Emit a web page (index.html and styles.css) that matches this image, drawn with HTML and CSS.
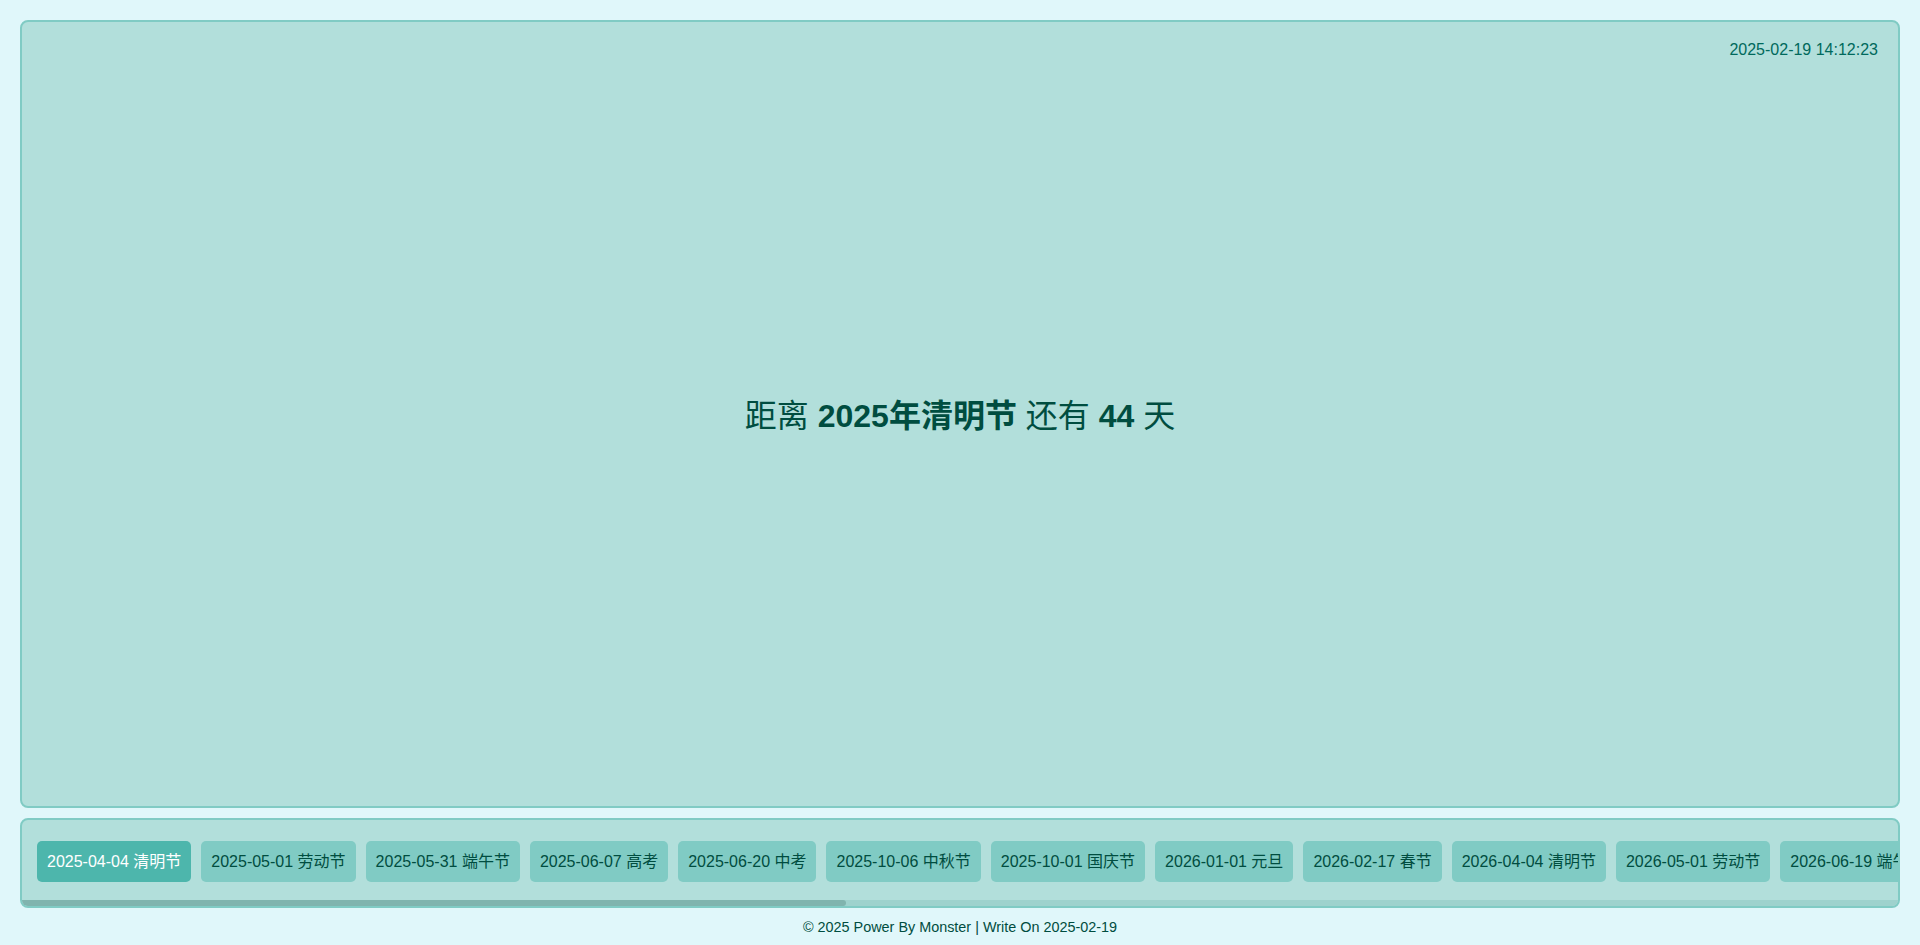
FILE: index.html
```html
<!DOCTYPE html>
<html lang="zh-CN">
<head>
<meta charset="utf-8">
<title>节日倒计时</title>
<link rel="stylesheet" href="styles.css">
</head>
<body>
<div class="page">
  <main class="stage">
    <div class="clock">2025-02-19 14:12:23</div>
    <div class="countdown">距离 <strong>2025年清明节</strong> 还有 <strong>44</strong> 天</div>
  </main>
  <nav class="dock">
    <div class="tabs">
      <span class="tab active">2025-04-04 清明节</span>
      <span class="tab">2025-05-01 劳动节</span>
      <span class="tab">2025-05-31 端午节</span>
      <span class="tab">2025-06-07 高考</span>
      <span class="tab">2025-06-20 中考</span>
      <span class="tab">2025-10-06 中秋节</span>
      <span class="tab">2025-10-01 国庆节</span>
      <span class="tab">2026-01-01 元旦</span>
      <span class="tab">2026-02-17 春节</span>
      <span class="tab">2026-04-04 清明节</span>
      <span class="tab">2026-05-01 劳动节</span>
      <span class="tab">2026-06-19 端午节</span>
      <span class="tab">2026-06-07 高考</span>
      <span class="tab">2026-06-20 中考</span>
      <span class="tab">2026-09-25 中秋节</span>
      <span class="tab">2026-10-01 国庆节</span>
      <span class="tab">2027-01-01 元旦</span>
      <span class="tab">2027-02-06 春节</span>
      <span class="tab">2027-04-05 清明节</span>
      <span class="tab">2027-05-01 劳动节</span>
      <span class="tab">2027-06-09 端午节</span>
      <span class="tab">2027-06-07 高考</span>
      <span class="tab">2027-06-20 中考</span>
      <span class="tab">2027-09-15 中秋节</span>
      <span class="tab">2027-10-01 国庆节</span>
      <span class="tab">2028-01-01 元旦</span>
      <span class="tab">2028-01-26 春节</span>
    </div>
    <div class="scroll-track"><div class="scroll-thumb" style="width: 824px"></div></div>
  </nav>
  <footer class="footer">© 2025 Power By Monster | Write On 2025-02-19</footer>
</div>
</body>
</html>
```

FILE: styles.css
```css
* { box-sizing: border-box; }

html, body {
  margin: 0;
  padding: 0;
  height: 100%;
}

body {
  background: #e0f7fa;
  font-family: "Liberation Sans", Arial, "Noto Sans CJK SC", sans-serif;
  color: #004d40;
}

.page {
  height: 100vh;
  display: flex;
  flex-direction: column;
  padding: 20px 20px 0;
}

.stage {
  position: relative;
  flex: 1;
  margin-bottom: 10px;
  background: #b2dfdb;
  border: 2px solid #80cbc4;
  border-radius: 8px;
  display: flex;
  align-items: center;
  justify-content: center;
}

.clock {
  position: absolute;
  top: 18px;
  right: 20px;
  font-size: 16px;
  line-height: 20px;
  color: #00695c;
}

.countdown {
  font-size: 32px;
  line-height: 40px;
  color: #004d40;
  margin-top: 4px;
}

.countdown strong {
  font-weight: bold;
}

.dock {
  flex: none;
  background: #b2dfdb;
  border: 2px solid #80cbc4;
  border-radius: 8px;
  overflow: hidden;
}

.tabs {
  display: flex;
  overflow: hidden;
  padding: 21px 10px 18px;
}

.scroll-track {
  height: 6px;
  background: #9ed2cd;
}

.scroll-thumb {
  height: 100%;
  background: #80b4ae;
  border-radius: 0 3px 3px 0;
}

.tab {
  flex: none;
  margin: 0 5px;
  padding: 10px 10px;
  font-size: 16px;
  line-height: 21px;
  white-space: nowrap;
  background: #80cbc4;
  color: #004d40;
  border-radius: 5px;
}

.tab.active {
  background: #4db6ac;
  color: #ffffff;
}

.footer {
  flex: none;
  height: 37px;
  padding: 10px 0 0;
  text-align: center;
  font-size: 14.4px;
  line-height: 18px;
  color: #004d40;
}
```
